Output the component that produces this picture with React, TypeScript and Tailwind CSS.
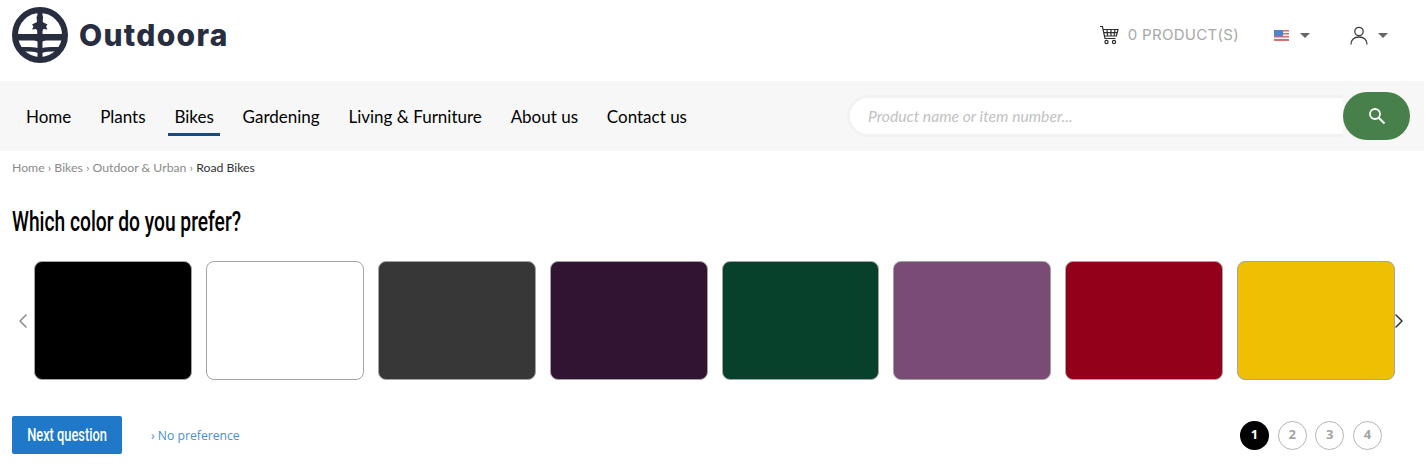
import { ChevronLeft, ChevronRight } from "lucide-react";

const navItems = ["Home", "Plants", "Bikes", "Gardening", "Living & Furniture", "About us", "Contact us"];
const colors = [
  "bg-[#000000]",
  "bg-[#ffffff]",
  "bg-[#373737]",
  "bg-[#311432]",
  "bg-[#07402b]",
  "bg-[#7a4b75]",
  "bg-[#93001a]",
  "bg-[#eebf03]",
];

function Logo() {
  return (
    <svg width="58" height="58" viewBox="0 0 58 58" className="shrink-0">
      <defs>
        <clipPath id="logo-clip">
          <circle cx="29" cy="29" r="26" />
        </clipPath>
      </defs>
      <circle cx="29" cy="29" r="25" fill="none" stroke="#282d3f" strokeWidth="6" />
      <g clipPath="url(#logo-clip)" fill="#282d3f">
        <path d="M26.500 3h5v52h-5z" />
        <path d="M29 5l3 6-.5 5 5 2.500-1.500 2 1.500 3-4-.5-1.500 2v3.500h-4.500V25l-1.500-2-4 .5 1.500-3-1.500-2 5-2.500-.5-5z" />
        <path d="M2 28h54v6.500H38c-4 0-7 .5-9 2.500-2-2-5-2.500-9-2.500H2z" />
        <path d="M2 41h16c5 0 9 .7 11 2.500 2-1.800 6-2.500 11-2.500h16v4.500H40c-5 0-9 .8-11 2.800-2-2-6-2.800-11-2.800H2z" />
      </g>
    </svg>
  );
}

function Cart() {
  return (
    <svg width="20" height="20" viewBox="0 0 20 20" fill="none" stroke="#2e2e2e" strokeWidth="1.200">
      <path d="M1 1.500h2.400l2.600 12h10.500" />
      <path d="M4 4.500h15l-1.600 6.500H5.500" />
      <path d="M8 4.500l.6 6.500M12 4.500v6.500M16 4.500l-.9 6.500M4.800 7.700h13.400" />
      <circle cx="7.500" cy="17" r="1.600" />
      <circle cx="15" cy="17" r="1.600" />
    </svg>
  );
}

function Flag() {
  return (
    <svg width="15" height="11" viewBox="0 0 15 11" className="block">
      <rect width="15" height="11" fill="#f1f1f4" />
      <path d="M0 0h15v1.500H0zM0 3h15v1.500H0zM0 6h15v1.500H0zM0 9h15v2H0z" fill="#d9706e" />
      <rect width="9" height="6.500" fill="#5a7fc8" />
    </svg>
  );
}

function User() {
  return (
    <svg width="18" height="19" viewBox="0 0 18 19" fill="none" stroke="#3c3c3c" strokeWidth="1.300" className="block">
      <circle cx="9" cy="5.500" r="4.200" />
      <path d="M1 18.500c0-4.500 3-7.500 8-7.500s8 3 8 7.500" />
    </svg>
  );
}

function Magnifier() {
  return (
    <svg width="18" height="18" viewBox="0 0 18 18" fill="none" stroke="#ffffff" strokeWidth="1.800">
      <circle cx="7" cy="7" r="5" />
      <path d="M10.700 10.700l5.800 5.800" strokeWidth="2" />
    </svg>
  );
}

function Caret() {
  return <span className="block h-0 w-0 border-x-[5.5px] border-t-[5px] border-x-transparent border-t-[#666666]" />;
}

export default function App() {
  return (
    <div className="w-[1426px] bg-white font-['Lato',sans-serif]">
      <header className="flex h-[70px] items-center pl-[11px] pr-[38px] mb-[11px]">
        <Logo />
        <span className="ml-[10px] text-[30px] font-extrabold leading-none tracking-[1.3px] text-[#282d3f] font-['Inter',sans-serif]">
          Outdoora
        </span>
        <div className="ml-auto flex items-center">
          <Cart />
          <span className="ml-[9px] text-[15px] tracking-[0.3px] text-[#a8a8a8] font-['Inter',sans-serif]">0 PRODUCT(S)</span>
          <span className="ml-[35px]">
            <Flag />
          </span>
          <span className="ml-[11px]">
            <Caret />
          </span>
          <span className="ml-[40px]">
            <User />
          </span>
          <span className="ml-[10px]">
            <Caret />
          </span>
        </div>
      </header>

      <nav className="mr-[2px] flex h-[70px] items-center bg-[#f7f7f7] pl-[26px] pr-[14px]">
        <ul className="flex translate-y-[1px] items-center gap-[28.8px]">
          {navItems.map((item) => (
            <li key={item} className="relative py-1 text-[17px] leading-[26px] text-black">
              {item}
              {item === "Bikes" && <span className="absolute -inset-x-[6px] bottom-[-2px] h-[3px] bg-[#1c4a7c]" />}
            </li>
          ))}
        </ul>
        <div className="ml-auto flex h-[48px] w-[563px] items-center">
          <div className="flex h-[42px] flex-1 items-center rounded-l-[21px] border-[3px] border-r-0 border-[#f2f2f2] bg-white pl-[18px]">
            <span className="translate-y-[1px] text-[15.7px] italic text-[#c2c2c2]">Product name or item number...</span>
          </div>
          <button className="flex h-[48px] w-[67px] items-center justify-center rounded-[24px] bg-[#47804a]">
            <Magnifier />
          </button>
        </div>
      </nav>

      <div className="px-[12px] pt-[9px] text-[12.25px] leading-[16px] text-[#8a8a8a]">
        Home › Bikes › Outdoor &amp; Urban › <span className="text-[#333333]">Road Bikes</span>
      </div>

      <h1 className="mt-[29px] pl-[12px] text-[28px] font-medium leading-[34px] text-black font-['Roboto',sans-serif]">
        <span className="inline-block origin-left scale-x-[0.686] whitespace-nowrap">Which color do you prefer?</span>
      </h1>

      <div className="mt-[22px] flex h-[119px] items-center pl-[11px] pr-[15.5px]">
        <ChevronLeft size={24} color="#8a8a8a" strokeWidth={1.500} className="shrink-0 -mr-[1px]" />
        <div className="grid flex-1 grid-cols-8 gap-[14px]">
          {colors.map((c) => (
            <div key={c} className={`h-[119px] rounded-[8px] border border-[#a3a3a3] ${c}`} />
          ))}
        </div>
        <ChevronRight size={24} color="#333333" strokeWidth={1.500} className="shrink-0 -ml-[8.5px]" />
      </div>

      <div className="mt-[36px] flex items-center pl-[12px] pr-[44px]">
        <button className="flex h-[38px] w-[110px] items-center justify-center rounded-[2px] bg-[#1f78c8] text-[19px] font-medium text-white font-['Roboto',sans-serif]">
          <span className="inline-block scale-x-[0.675] whitespace-nowrap">Next question</span>
        </button>
        <span className="ml-[29px] translate-y-[1px] text-[12.2px] text-[#4a90d2] font-['Open_Sans',sans-serif]">› No preference</span>
        <div className="ml-auto flex items-center gap-[8.7px] font-['Open_Sans',sans-serif] text-[13px] font-bold">
          <span className="flex h-[29px] w-[29px] items-center justify-center rounded-full bg-black text-white">1</span>
          {["2", "3", "4"].map((n) => (
            <span
              key={n}
              className="flex h-[29px] w-[29px] items-center justify-center rounded-full border border-[#b5b5b5] text-[#a3a3a3]"
            >
              {n}
            </span>
          ))}
        </div>
      </div>
    </div>
  );
}
